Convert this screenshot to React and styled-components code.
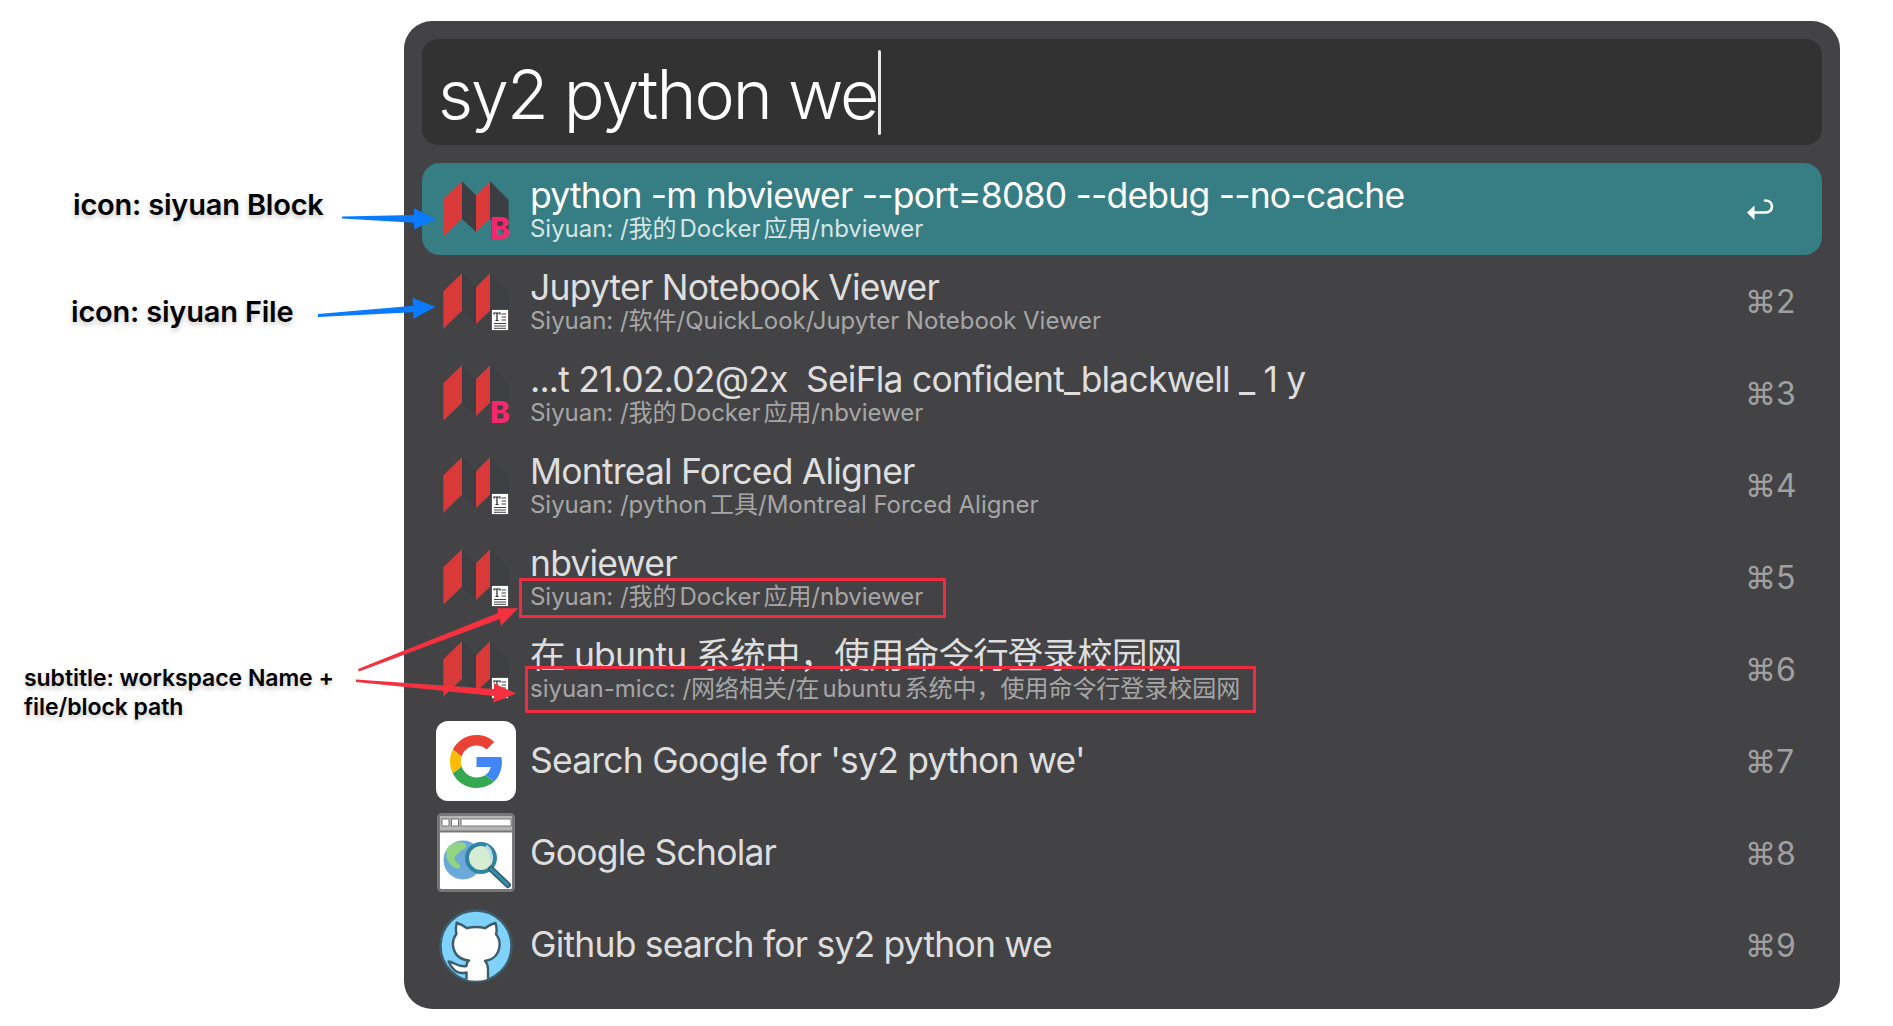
import React from 'react';
import styled, { createGlobalStyle } from 'styled-components';

const GlobalStyle = createGlobalStyle`
  html, body {
    margin: 0;
    padding: 0;
    background: #fff;
  }
`;

const FONT = `Inter, "Noto Sans CJK SC", sans-serif`;

const Page = styled.div`
  position: relative;
  width: 1893px;
  height: 1026px;
  padding: 21px 53px 0 404px;
  box-sizing: border-box;
  overflow: hidden;
  font-family: ${FONT};
  text-autospace: normal;
`;

const Panel = styled.div`
  width: 1436px;
  height: 988px;
  padding: 18px;
  box-sizing: border-box;
  background: #434345;
  border-radius: 28px;
`;

const SearchBox = styled.div`
  display: flex;
  align-items: center;
  height: 106px;
  padding-left: 16px;
  background: #323232;
  border-radius: 16px;
  color: #fff;
  font-size: 68px;
  font-weight: 300;
  letter-spacing: -2px;
`;

const SearchText = styled.span`
  padding-top: 3px;
`;

const Caret = styled.span`
  width: 3px;
  height: 85px;
  margin-left: 1px;
  background: #e8e8e8;
  border-radius: 2px;
`;

const List = styled.div`
  margin-top: 18px;
`;

const Row = styled.div`
  display: flex;
  align-items: center;
  height: 92px;
  padding: 0 29px 0 14px;
  box-sizing: border-box;
  border-radius: 18px;
  background: ${p => (p.$selected ? '#367d84' : 'transparent')};
`;

const IconCell = styled.div`
  position: relative;
  flex: none;
  width: 80px;
  height: 80px;
`;

const Tile = styled.div`
  display: flex;
  align-items: center;
  justify-content: center;
  width: 80px;
  height: 80px;
  background: #fff;
  border-radius: 12px;
`;

const BlockBadge = styled.span`
  position: absolute;
  right: 6px;
  bottom: 10px;
  color: #f5286e;
  font-size: 30px;
  line-height: 22px;
  font-weight: 800;
`;

const FileBadge = styled.svg`
  position: absolute;
  right: 7px;
  bottom: 10px;
`;

const RowText = styled.div`
  flex: 1;
  min-width: 0;
  margin-left: 14px;
  padding-top: ${p => (p.$single ? '0' : '2px')};
`;

const Title = styled.div`
  color: ${p => (p.$selected ? '#fff' : '#dedede')};
  font-size: 35.5px;
  line-height: 36px;
  white-space: pre;
  letter-spacing: -0.8px;
`;

const Subtitle = styled.div`
  position: relative;
  width: fit-content;
  color: ${p => (p.$selected ? '#d5e5e6' : '#a6a6a6')};
  font-size: 24px;
  line-height: 29px;
  white-space: pre;
  letter-spacing: -0.03px;

  ${p => p.$mark && `
    &::after {
      content: '';
      position: absolute;
      inset: ${p.$mark};
      border: 3px solid #ef2b3f;
    }
  `}
`;

const Shortcut = styled.div`
  flex: none;
  width: 46px;
  display: flex;
  align-items: center;
  margin-top: 2px;
  color: #a0a0a0;
  font-size: 32px;
  line-height: 36px;
  white-space: nowrap;
`;

const CmdGlyph = styled.span`
  margin-left: -2px;
  font-family: "DejaVu Sans", sans-serif;
  font-size: 31px;
`;

const Note = styled.div`
  position: absolute;
  left: ${p => p.$x}px;
  top: ${p => p.$y}px;
  color: #000;
  font-size: ${p => p.$size}px;
  font-weight: 600;
  line-height: 29px;
  white-space: pre;
  letter-spacing: ${p => p.$spacing || 0}px;
  text-shadow: 0 3px 5px rgba(0, 0, 0, 0.22);
`;

const Overlay = styled.svg`
  position: absolute;
  left: 0;
  top: 0;
`;

function SiyuanIcon({ muted }) {
  const dark = muted ? '#3d3f43' : '#3c3e44';
  return (
    <svg width="80" height="80" viewBox="0 0 80 80">
      <polygon points="7.3,30.3 26,12.3 26,49.7 7.3,67.7" fill="#d93a39" />
      <polygon points="26,12.3 40,26.3 40,63 26,49.7" fill={dark} />
      <polygon points="40,26.3 54,12.3 54,49.7 40,63" fill="#d93a39" />
      <polygon points="54,12.3 72.7,31 72.7,68.3 54,49.7" fill={dark} />
    </svg>
  );
}

function FileDoc() {
  return (
    <FileBadge width="18" height="22" viewBox="0 0 18 22">
      <rect x="0.5" y="0.5" width="17" height="21" fill="#fff" stroke="#222" strokeWidth="0.6" />
      <path d="M3 5.5V4h6v1.5M6 4v7.5M4.5 11.5h3" fill="none" stroke="#222" strokeWidth="1.2" />
      <path d="M10.5 5h4.5M10.5 8h4.5M10.5 11h4.5M3 14.5h12M3 17h12M3 19.3h12" stroke="#444" strokeWidth="1" />
    </FileBadge>
  );
}

function GoogleLogo() {
  return (
    <svg width="53" height="53" viewBox="0 0 48 48">
      <path fill="#ea4335" d="M24 9.5c3.54 0 6.71 1.22 9.21 3.6l6.85-6.85C35.9 2.38 30.47 0 24 0 14.62 0 6.51 5.38 2.56 13.22l7.98 6.19C12.43 13.72 17.74 9.5 24 9.5z" />
      <path fill="#4285f4" d="M46.98 24.55c0-1.57-.15-3.09-.38-4.55H24v9.02h12.94c-.58 2.96-2.26 5.48-4.78 7.18l7.73 6c4.51-4.18 7.09-10.36 7.09-17.65z" />
      <path fill="#fbbc05" d="M10.53 28.59c-.48-1.45-.76-2.99-.76-4.59s.27-3.14.76-4.59l-7.98-6.19C.92 16.46 0 20.12 0 24c0 3.88.92 7.54 2.56 10.78l7.97-6.19z" />
      <path fill="#34a853" d="M24 48c6.48 0 11.93-2.13 15.89-5.81l-7.73-6c-2.15 1.45-4.92 2.3-8.16 2.3-6.26 0-11.57-4.22-13.47-9.91l-7.98 6.19C6.51 42.62 14.62 48 24 48z" />
    </svg>
  );
}

function ScholarIcon() {
  return (
    <svg width="80" height="80" viewBox="0 0 80 80">
      <rect x="2.500" y="1.500" width="75" height="76" rx="3" fill="#fff" stroke="#777" strokeWidth="3" />
      <rect x="4" y="3" width="72" height="15" fill="#b5b5b5" />
      <line x1="3" y1="18.500" x2="77" y2="18.500" stroke="#777" strokeWidth="2" />
      <rect x="6" y="6" width="7" height="7" fill="#fff" stroke="#777" />
      <rect x="15.500" y="6" width="7" height="7" fill="#fff" stroke="#777" />
      <rect x="25" y="6" width="50" height="7" fill="#fff" stroke="#777" />
      <circle cx="27" cy="47" r="19.500" fill="#6aa9d8" />
      <path d="M13 33c5-4 13-5 17-2 1 4-3 6-6 7-2 4-6 4-5 9 1 3 5 3 5 8-4 2-11-3-13-10-1-5-1-9 2-12z" fill="#93d483" />
      <circle cx="45" cy="45" r="14" fill="#d6ecd3" stroke="#2f84a1" strokeWidth="4" />
      <path d="M50 33c4 3 6 7 5 14" fill="none" stroke="#b9d9ef" strokeWidth="3" />
      <line x1="55" y1="56" x2="72" y2="72" stroke="#3c5e6c" strokeWidth="6" strokeLinecap="round" />
      <line x1="55" y1="56" x2="72" y2="72" stroke="#2f8fae" strokeWidth="3" strokeLinecap="round" />
    </svg>
  );
}

function GithubIcon() {
  return (
    <svg width="80" height="80" viewBox="0 0 80 80">
      <defs>
        <clipPath id="gh-circle">
          <circle cx="40" cy="41" r="35" />
        </clipPath>
      </defs>
      <circle cx="40" cy="41" r="35.500" fill="#7fd3fb" stroke="#3f5c6b" strokeWidth="2.500" />
      <g clipPath="url(#gh-circle)">
        <path
          d="M20.500 18c4 .8 7.500 3 10.500 5.200 5-1.400 13-1.400 18 0 3-2.200 6.500-4.400 10.500-5.200 1.200 4 1.500 8 .5 11.200 2.800 3.300 4 7.300 3.500 11.800-1 9-7 14-14.500 15 2 2 3 4.500 3 8v13H30.500v-9.500c-8 2-13-1-18-11 5 0 9 6 18 4.500 0-2 .8-4.500 2.500-5.500-9-1-15-6-16-15-.5-4.500 1-8.500 3.500-11.800-1-3.200-.7-7.200.5-11.200z"
          fill="#fff"
          stroke="#3f5c6b"
          strokeWidth="2.400"
          strokeLinejoin="round"
        />
      </g>
    </svg>
  );
}

function EnterIcon() {
  return (
    <svg width="27" height="22" viewBox="0 0 27 22">
      <path d="M18 1.500c4 0 7 2.300 7 6s-3 6-7 6H6" fill="none" stroke="#fff" strokeWidth="2.600" strokeLinecap="round" />
      <polygon points="0,13.500 7.500,6.500 7.500,21" fill="#fff" />
    </svg>
  );
}

const rows = [
  { icon: 'block', title: 'python -m nbviewer --port=8080 --debug --no-cache', sub: 'Siyuan: /我的Docker应用/nbviewer', selected: true },
  { icon: 'file', title: 'Jupyter Notebook Viewer', sub: 'Siyuan: /软件/QuickLook/Jupyter Notebook Viewer', key: '2' },
  { icon: 'block', title: '...t 21.02.02@2x  SeiFla confident_blackwell _ 1 y', sub: 'Siyuan: /我的Docker应用/nbviewer', key: '3' },
  { icon: 'file', title: 'Montreal Forced Aligner', sub: 'Siyuan: /python工具/Montreal Forced Aligner', key: '4' },
  { icon: 'file', title: 'nbviewer', sub: 'Siyuan: /我的Docker应用/nbviewer', key: '5', mark: '-4px -23px -7px -11px' },
  { icon: 'file', title: '在 ubuntu 系统中，使用命令行登录校园网', sub: 'siyuan-micc: /网络相关/在ubuntu系统中，使用命令行登录校园网', key: '6', mark: '-8px -16px -10px -5px' },
  { icon: 'google', title: "Search Google for 'sy2 python we'", key: '7' },
  { icon: 'scholar', title: 'Google Scholar', key: '8' },
  { icon: 'github', title: 'Github search for sy2 python we', key: '9' },
];

function RowIcon({ type, selected }) {
  if (type === 'google') {
    return <Tile><GoogleLogo /></Tile>;
  }
  if (type === 'scholar') return <ScholarIcon />;
  if (type === 'github') return <GithubIcon />;
  return (
    <>
      <SiyuanIcon muted={!selected} />
      {type === 'block' ? <BlockBadge>B</BlockBadge> : <FileDoc />}
    </>
  );
}

function App() {
  return (
    <Page>
      <GlobalStyle />
      <Panel>
        <SearchBox>
          <SearchText>sy2 python we</SearchText><Caret />
        </SearchBox>
        <List>
          {rows.map((row, i) => (
            <Row key={i} $selected={row.selected}>
              <IconCell>
                <RowIcon type={row.icon} selected={row.selected} />
              </IconCell>
              <RowText $single={!row.sub}>
                <Title $selected={row.selected}>{row.title}</Title>
                {row.sub && <Subtitle $selected={row.selected} $mark={row.mark}>{row.sub}</Subtitle>}
              </RowText>
              <Shortcut>
                {row.selected ? <EnterIcon /> : <><CmdGlyph>⌘</CmdGlyph>{row.key}</>}
              </Shortcut>
            </Row>
          ))}
        </List>
      </Panel>

      <Note $x={73} $y={190} $size={29} $spacing={-0.2}>icon: siyuan Block</Note>
      <Note $x={71} $y={297} $size={29} $spacing={-0.2}>icon: siyuan File</Note>
      <Note $x={24} $y={664} $size={23} $spacing={-0.05}>{'subtitle: workspace Name +\nfile/block path'}</Note>

      <Overlay width="1893" height="1026" viewBox="0 0 1893 1026">
        <polygon fill="#0a7aff" points="342,216.500 414,215 414,208.300 436,219.300 414,229.300 414,222.700 342,218.500" />
        <polygon fill="#0a7aff" points="318,314 413.300,305.700 412.300,297.700 435.300,306.700 413.300,319 413.300,312.300 318,317" />
        <polygon fill="#f5303f" points="358,669 498,613 497.300,608.300 518.300,608.300 500.700,626 500,619 359,671.500" />
        <polygon fill="#f5303f" points="356,679.500 494,689 494,683.300 516,693.500 493.300,702.700 494,696 356,682" />
      </Overlay>
    </Page>
  );
}

export default App;
